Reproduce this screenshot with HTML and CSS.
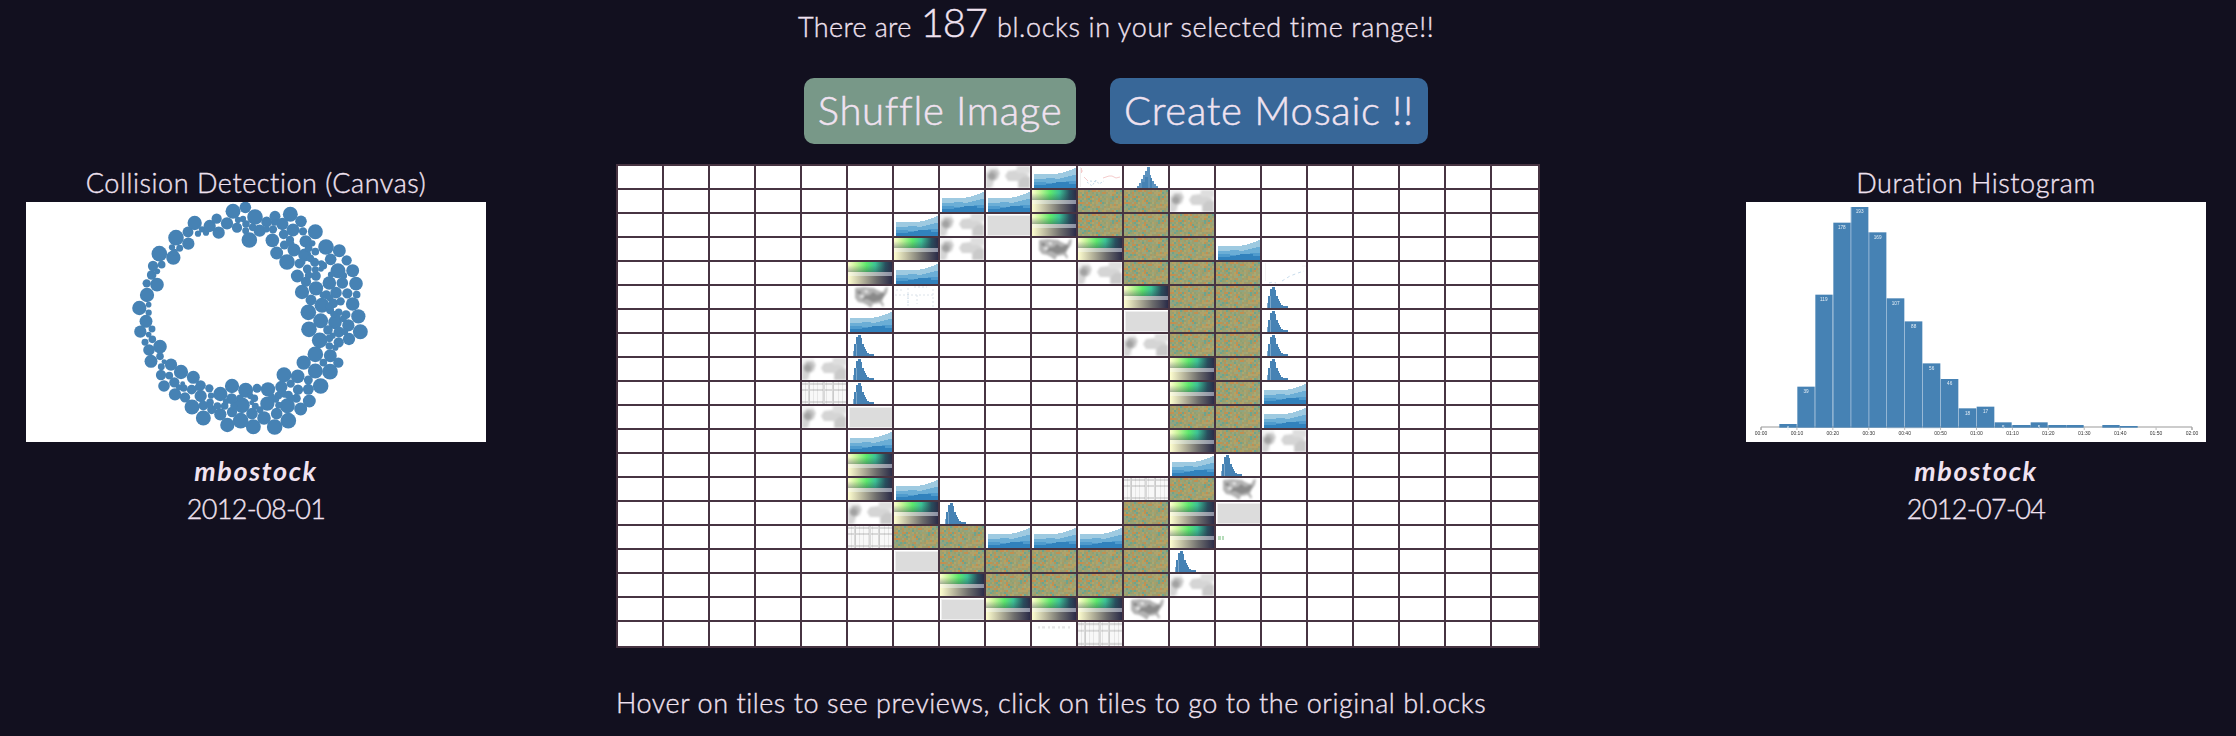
FILE: index.html
```
<!DOCTYPE html>
<html lang="en">
<head>
<meta charset="utf-8">
<title>Bl.ocks Mosaic</title>
<link rel="stylesheet" href="styles.css">
</head>
<body>
<svg class="defs" aria-hidden="true">
  <defs>
    <linearGradient id="gc"><stop offset="0" stop-color="#ffffcf"/><stop offset=".17" stop-color="#c8f59a"/><stop offset=".42" stop-color="#5ce86c"/><stop offset=".62" stop-color="#3cc295"/><stop offset=".85" stop-color="#28505f"/><stop offset="1" stop-color="#2b2c48"/></linearGradient>
    <linearGradient id="gg"><stop offset="0" stop-color="#ffffd0"/><stop offset=".3" stop-color="#bdbba0"/><stop offset=".65" stop-color="#6c6c6c"/><stop offset="1" stop-color="#2b2c48"/></linearGradient>
    <linearGradient id="gm"><stop offset="0" stop-color="#fdfde0"/><stop offset=".4" stop-color="#c6cdc0"/><stop offset="1" stop-color="#8c90a4"/></linearGradient>
    <linearGradient id="dark" x2="0" y2="1"><stop offset=".3" stop-color="#2b3c50" stop-opacity="0"/><stop offset="1" stop-color="#2b3c50" stop-opacity=".4"/></linearGradient>
    <filter id="soft" x="-5%" y="-5%" width="110%" height="110%" color-interpolation-filters="sRGB"><feGaussianBlur stdDeviation="0.8"/></filter>
    <filter id="fine" x="0" y="0" width="100%" height="100%" color-interpolation-filters="sRGB"><feGaussianBlur stdDeviation="0.6"/></filter>
    <filter id="softer" x="-5%" y="-5%" width="110%" height="110%" color-interpolation-filters="sRGB"><feGaussianBlur stdDeviation="2"/></filter>
    <symbol id="tile-a" viewBox="0 0 44 22" preserveAspectRatio="none">
      <path fill="#9ecae1" d="M2 8H26V7H31V6H34V5H37V4H40V3H42V2H44V22H2z"/>
      <path fill="#6baed6" d="M2 13H14V12H23V13H28V12H32V11H36V10H40V9H44V22H2z"/>
      <path fill="#4f9bcd" d="M2 16H14V17H24V16H34V15H44V22H2z"/>
      <path fill="#3182bd" d="M2 19H14V18H20V17H24V16H37V18H44V22H2z"/>
    </symbol>
    <symbol id="tile-c" viewBox="0 0 44 22" preserveAspectRatio="none">
      <rect width="44" height="10" fill="url(#gc)"/><rect width="44" height="10" fill="url(#dark)"/>
      <rect y="10" width="44" height="4" fill="url(#gm)"/><rect y="14" width="44" height="8" fill="url(#gg)"/>
    </symbol>
    <symbol id="tile-g" viewBox="0 0 44 22" preserveAspectRatio="none">
      <g filter="url(#soft)"><path fill="#f2f2f2" d="M0 0H12V5L8 15V22H0zM30 0H44V22H32z"/>
      <path fill="#d5d5d5" d="M5 3h7l2 4-2 6-4 2-3 7H0V7zM19 10l3-5 9-1 2 2 9 2v14H32v-7H22z"/>
      <path fill="#dedede" d="M31 0h13v7H31z"/>
      <path fill="#bcbcbc" d="M4 4h5l3 4-3 6-5 1z"/><path fill="#cacaca" d="M33 15l4-4h7v11H33z"/>
      <circle cx="5.500" cy="10" r="3.500" fill="#a2a2a2"/></g>
    </symbol>
    <symbol id="tile-u" viewBox="0 0 44 22" preserveAspectRatio="none">
      <g filter="url(#soft)"><path fill="#b4b4b4" d="M7 2l9-1 10 1 3 2 5 2 2-1 1-3 3-1-1 6-3 4-2 4 2 4-1 2-3-4-7 1-2 4-4-3-4-2-5-1-3-4z"/>
      <path fill="#8a8a8a" d="M25 6l4 3 5-2 3 1-4 6-8 2-6-3-5 1 2-4 6-1zM9 5h4v3h-3z"/><path fill="#dedede" d="M16 4h4v3h-3zM12 9h4v3h-4z"/></g>
    </symbol>
    <symbol id="tile-h" viewBox="0 0 44 22" preserveAspectRatio="none">
      <path fill="#4682b4" d="M5 22V17H6V10H8V3H10V1H13V4H14V10H16V13H17V15H18V17H19V19H21V20H26V22z"/><path fill="#7da8cb" d="M5 17h1v5h-1zM8 10h1v12h-1z"/>
    </symbol>
    <symbol id="tile-H" viewBox="0 0 44 22" preserveAspectRatio="none">
      <path fill="#5b91be" d="M13 22V20H15V17H17V13H19V9H21V5H23V1H26V9H27V12H28V15H30V18H32V20H34V22z"/><path fill="#4682b4" d="M18 16h3v-5h3v11h-6zM26 12h2v10h-2z"/>
    </symbol>
    <symbol id="tile-d" viewBox="0 0 44 22" preserveAspectRatio="none"><rect x="1" y="1" width="43" height="21" fill="#efefef"/><rect x="2" y="2" width="42" height="19" fill="#dcdcdc"/></symbol>
    <symbol id="tile-w" viewBox="0 0 44 22" preserveAspectRatio="none">
      <rect width="44" height="22" fill="#f8f8f8"/>
      <g filter="url(#fine)"><path stroke="#000" stroke-opacity=".07" stroke-width="1" d="M3.500 0v22M7.500 0v22M11.500 0v22M15.500 0v22M20.500 0v22M24.500 0v22M31.500 0v22M36.500 0v22M40.500 0v22"/>
      <path stroke="#000" stroke-opacity=".12" stroke-width="2" d="M7 0v22M22 0v22M31 0v22M0 2h44M0 8h44M0 20h44"/></g>
    </symbol>
    <symbol id="tile-s" viewBox="0 0 44 22" preserveAspectRatio="none">
      <path fill="none" stroke="#f5cccc" d="M3.500 2v5M2 5h3M6 11l4 4M25 12l6-2h3l4 2 4-1"/><path fill="none" stroke="#c4d9e9" stroke-dasharray="2 2" d="M9 16l5 4 4-6 3 4 5-3M12 15l8 1"/><path stroke="#f0eeee" d="M2.500 1v20"/>
    </symbol>
    <symbol id="tile-t" viewBox="0 0 44 22" preserveAspectRatio="none">
      <path fill="none" stroke="#dce3ea" stroke-dasharray="2 2" d="M1 9h40M14 2v19M39 3v18M2 4h8M20 1h13M23 9v9"/><path stroke="#bfd3e5" stroke-dasharray="1 3" d="M14 8v12"/>
    </symbol>
    <symbol id="tile-l" viewBox="0 0 44 22" preserveAspectRatio="none"><path fill="none" stroke="#c8dcec" stroke-dasharray="3 3" d="M7 21l4-1 3 1M20 19l8-5 8-3 6-2"/><path stroke="#f3f3f3" d="M3.500 1v18M40 4h4"/></symbol>
    <symbol id="tile-e" viewBox="0 0 44 22" preserveAspectRatio="none"><path fill="#b6dcba" d="M2 10h3v4H2zM6 10h2v4H6z"/></symbol>
    <symbol id="tile-f" viewBox="0 0 44 22" preserveAspectRatio="none"><path stroke="#e6e6e6" stroke-width="2" stroke-dasharray="2 2 3 3" d="M6 5h32"/></symbol>
    <symbol id="tile-m" viewBox="0 0 44 22" preserveAspectRatio="none"></symbol>
  </defs>
</svg>
<main class="page">
  <p class="summary"><span>There are</span><span class="count">187</span><span class="tail">bl.ocks in your selected time range!!</span></p>
  <div class="actions">
    <button class="btn btn-shuffle">Shuffle Image</button>
    <button class="btn btn-create">Create Mosaic !!</button>
  </div>
  <div class="stage">
    <section class="preview">
      <h2 class="title">Collision Detection (Canvas)</h2>
      <svg class="thumb" id="collision" viewBox="78 156 1380 720"></svg>
      <p class="author">mbostock</p>
      <p class="date">2012-08-01</p>
    </section>
    <div class="center">
      <div class="mosaic" id="mosaic"></div>
      <p class="hint">Hover on tiles to see previews, click on tiles to go to the original bl.ocks</p>
    </div>
    <section class="preview">
      <h2 class="title">Duration Histogram</h2>
      <svg class="thumb" id="histogram" viewBox="78 156 1380 720"></svg>
      <p class="author">mbostock</p>
      <p class="date">2012-07-04</p>
    </section>
  </div>
</main>
<script src="script.js"></script>
</body>
</html>
```
FILE: styles.css
```
* { box-sizing: border-box; }
body { margin: 0; background: #12101f; color: #f0e2f0; font-family: Lato, "Open Sans", sans-serif; font-weight: 300; font-size: 27px; overflow: hidden; -webkit-text-stroke: 0.35px #f0e2f0; }
p, h2 { margin: 0; font-weight: 300; white-space: nowrap; }
.defs { position: absolute; width: 0; height: 0; }
.page { width: 2236px; height: 736px; display: flex; flex-direction: column; }
.summary { height: 78px; padding-left: 798px; display: flex; align-items: baseline; line-height: 44px; letter-spacing: 0.35px; }
.count { font-size: 40px; margin: 0 10px 0 9px; letter-spacing: -1.1px; }
.tail { letter-spacing: 0.62px; }
.actions { height: 86px; padding-left: 804px; display: flex; gap: 34px; }
.btn { height: 66px; padding: 0 0 2px; border: 0; border-radius: 10px; font: 300 40px/62px Lato, "Open Sans", sans-serif; letter-spacing: 0.7px; color: #f0e2f0; white-space: nowrap; -webkit-text-stroke: 0.5px #f0e2f0; }
.btn-shuffle { width: 272px; background: #789888; }
.btn-create { width: 318px; background: #386798; }
.stage { display: grid; grid-template-columns: 590px 1130px 460px; padding: 0 30px 0 26px; }
.preview { width: 460px; text-align: center; }
.title { font-size: 27px; height: 38px; line-height: 38px; letter-spacing: 0.55px; }
.thumb { display: block; width: 460px; height: 240px; background: #fff; }
.author { font-weight: 700; font-style: italic; letter-spacing: 1.6px; height: 38px; line-height: 38px; margin-top: 10px; -webkit-text-stroke: 0; }
.date { height: 38px; line-height: 38px; letter-spacing: -0.7px; }
.mosaic { display: grid; grid-template-columns: repeat(19, 44px) 46px; grid-template-rows: repeat(19, 22px) 24px; gap: 2px; padding: 2px; background: #473442; width: 924px; }
.tile { display: block; width: 100%; height: 100%; background: #fff; }
.hint { margin-top: 35px; line-height: 40px; letter-spacing: 0.54px; }
.bars { fill: #4682b4; }
.soft { filter: url(#softer); }
.thumb text { letter-spacing: 0; -webkit-text-stroke: 0; }
.bar-text { fill: #e4eef6; font: 14px "Liberation Sans", sans-serif; text-anchor: middle; }
.axis-text { fill: #333; font: 15px "Liberation Sans", sans-serif; text-anchor: middle; }
```
FILE: script.js
```
const NS = 'http://www.w3.org/2000/svg';
function add(parent, name, attrs, text) {
  const n = document.createElementNS(NS, name);
  for (const k in attrs) n.setAttribute(k, attrs[k]);
  if (text) n.textContent = text;
  parent.appendChild(n);
  return n;
}

// speckled texture tile
let seed = 17;
const rnd = () => (seed = (seed * 16807) % 2147483647) / 2147483647;
const speckle = ['#a3a06c', '#98a476', '#b8a060', '#8ea582', '#aaa871', '#9ba67c', '#c48f50', '#a59a68', '#6ca48e', '#9a9f70', '#b0a26c', '#91a072'];
const m = document.getElementById('tile-m');
add(m, 'rect', { width: 44, height: 22, fill: '#a0a171' });
const texture = add(m, 'g', { filter: 'url(#fine)' });
for (let y = 0; y < 22; y += 2) for (let x = 0; x < 44; x += 2)
  add(texture, 'rect', { x, y, width: 2, height: 2, fill: speckle[Math.floor(rnd() * speckle.length)] });

const rows = [
  '........gasH........',
  '.......aacmmg.......',
  '......agdcmmm.......',
  '......cg.ucmma......',
  '.....ca...gmmml.....',
  '.....ut....cmmh.....',
  '.....a.....dmmh.....',
  '.....h.....gmmh.....',
  '....gh......cmh.....',
  '....wh......cma.....',
  '....gd......mma.....',
  '.....a......cmg.....',
  '.....c......ah......',
  '.....ca....wmu......',
  '.....gch...mcd......',
  '.....wmmaaamce......',
  '......dmmmmmh.......',
  '.......cmmmmg.......',
  '.......dcccu........',
  '.........fw.........'
];
const mosaic = document.getElementById('mosaic');
rows.forEach(row => [...row].forEach(key => {
  const t = add(mosaic, 'svg', { class: 'tile' });
  if (key !== '.') add(t, 'use', { href: '#tile-' + key, width: '100%', height: '100%' });
}));

// x, y, radius
const circles = [
[339,49,21],[376,37,16],[405,66,22],[388,135,22],[419,107,17],[440,81,15],[465,64,15],[511,58,21],[543,79,16],[487,87,17],[457,136,19],[470,174,18],[501,201,22],[519,105,18],[586,110,21],[522,165,18],[557,139,17],[554,180,18],[618,156,22],[658,167,18],[680,196,14],[632,193,16],[654,227,21],[698,227,18],[708,266,19],[532,243,18],[546,291,20],[565,352,22],[567,403,22],[599,436,22],[588,280,20],[628,264,19],[667,264,16],[606,331,21],[602,377,21],[645,382,19],[685,391,17],[715,364,20],[721,410,21],[687,432,17],[698,327,19],[648,293,16],[682,295,14],[710,299,10],[573,315,15],[558,260,14],[538,206,13],[562,222,12],[584,202,12],[588,243,13],[586,170,10],[566,160,10],[610,212,10],[603,222,7],[619,299,12],[640,325,13],[662,319,11],[630,345,11],[656,352,10],[678,359,12],[624,405,13],[657,411,15],[656,442,14],[628,430,10],[628,453,10],[646,458,8],[586,478,22],[631,482,18],[655,503,14],[610,503,10],[586,528,21],[630,530,22],[551,503,20],[602,573,22],[568,618,18],[542,642,18],[505,677,22],[464,696,22],[400,695,21],[362,677,22],[322,690,20],[492,539,21],[533,544,19],[565,555,12],[565,583,15],[534,584,14],[512,566,11],[484,576,17],[444,583,20],[411,580,12],[377,586,21],[336,573,20],[301,597,20],[502,632,21],[442,626,20],[470,656,16],[432,669,19],[396,656,16],[366,631,22],[335,611,15],[336,651,14],[301,658,17],[250,669,21],[216,636,21],[242,603,17],[215,584,13],[242,571,14],[268,580,11],[220,547,18],[183,531,20],[153,509,17],[163,562,14],[165,598,17],[132,573,16],[123,540,14],[195,607,14],[191,579,10],[148,542,10],[124,515,9],[120,484,10],[93,499,18],[87,465,16],[120,455,19],[97,433,10],[75,442,9],[61,410,17],[96,402,9],[78,379,18],[86,353,8],[58,339,20],[86,329,7],[81,300,20],[111,269,19],[80,265,11],[95,240,13],[112,229,7],[99,213,14],[125,209,10],[160,188,20],[118,176,22],[168,128,22],[205,146,17],[204,111,15],[224,84,20],[234,116,8],[246,103,8],[258,113,8],[269,93,17],[290,71,14],[296,113,17],[321,85,17],[351,98,14],[179,160,9],[163,172,9],[156,157,8],[354,75,8],[378,87,10],[369,72,8],[398,97,10],[377,107,9],[440,103,8],[459,103,11],[463,83,8],[491,118,13],[510,135,11],[493,150,12],[513,148,9],[549,109,11],[577,145,8],[546,201,9],[571,190,10],[566,241,10],[586,224,9],[633,239,8],[671,242,9],[604,205,8],[630,309,9],[608,300,8],[653,365,7],[670,371,9],[641,358,9],[626,334,8],[638,422,8],[675,411,8],[273,602,8],[270,622,10],[250,632,13],[275,644,12],[292,633,10],[314,633,10],[341,632,9],[270,633,8],[318,620,8],[403,610,10],[391,603,8],[406,634,9],[395,623,6],[420,644,9],[475,602,10],[493,598,9],[506,600,11],[529,610,12],[515,610,9],[476,631,9],[468,614,8],[455,606,9],[360,609,9],[188,566,6],[177,577,8],[233,578,8],[132,500,6],[86,419,7]
];
const c = add(document.getElementById('collision'), 'g', { class: 'bars soft', transform: 'translate(360 135)' });
circles.forEach(([cx, cy, r]) => add(c, 'circle', { cx, cy, r: r + 1.4 }));

// x, top, width, label
const bars = [[178,822,52,'6'],[232,710,52,'39'],[286,434,51,'119'],[340,218,51,'178'],[393,171,52,'193'],[447,247,52,'169'],[501,445,52,'107'],[555,514,52,'88'],[609,640,52,'56'],[663,687,52,'46'],[717,775,51,'18'],[770,770,53,'17'],[825,817,50,'5'],[877,825,55,''],[932,817,51,'5'],[985,825,55,''],[1041,825,50,''],[1147,825,52,''],[1200,828,53,'']];
const h = add(document.getElementById('histogram'), 'g', { class: 'soft' });
add(h, 'path', { d: 'M123 840V831H1416V840', fill: 'none', stroke: '#999', 'stroke-width': 3 });
const g = add(h, 'g', { class: 'bars' });
bars.forEach(([x, y, w, label], i) => {
  add(g, 'rect', { x, y, width: w, height: 833 - y });
  const next = bars[i + 1];
  if (next && next[0] - x - w < 5) {
    const top = Math.max(y, next[1]);
    add(g, 'rect', { x: x + w - 0.5, y: top, width: next[0] - x - w + 1, height: 833 - top, opacity: 0.4 });
  }
  if (label) add(h, 'text', { x: x + w / 2, y: y + 19, class: 'bar-text' }, label);
});
['00:00','00:10','00:20','00:30','00:40','00:50','01:00','01:10','01:20','01:30','01:40','01:50','02:00'].forEach((label, i) => {
  const x = 123 + i * 107.75;
  add(h, 'path', { d: 'M' + x + ' 833v7', stroke: '#999', 'stroke-width': 2 });
  add(h, 'text', { x, y: 856, class: 'axis-text' }, label);
});
```
